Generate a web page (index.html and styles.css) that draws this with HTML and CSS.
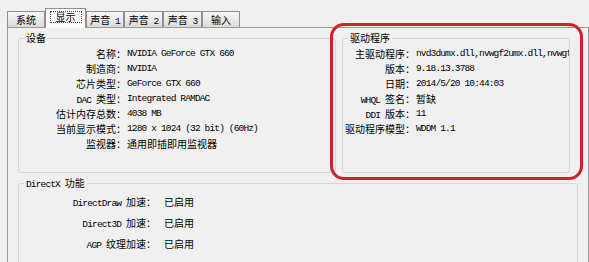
FILE: index.html
```html
<!DOCTYPE html>
<html lang="zh-CN">
<head>
<meta charset="utf-8">
<title>DirectX 诊断工具 - 显示</title>
<link rel="stylesheet" href="styles.css">
</head>
<body>
<div class="window">
  <div class="tabs">
    <div class="tab w38">系统</div>
    <div class="tab sel"><span class="focus">显示</span></div>
    <div class="tab w38">声音<span class="lt"> 1</span></div>
    <div class="tab w39">声音<span class="lt"> 2</span></div>
    <div class="tab w39">声音<span class="lt"> 3</span></div>
    <div class="tab w38">输入</div>
  </div>
  <div class="panel">
    <div class="top">
      <fieldset class="group dev">
        <legend>设备</legend>
        <div class="rows">
          <div class="k">名称：</div><div class="v">NVIDIA GeForce GTX 660</div>
          <div class="k">制造商：</div><div class="v">NVIDIA</div>
          <div class="k">芯片类型：</div><div class="v">GeForce GTX 660</div>
          <div class="k"><span class="lt">DAC </span>类型：</div><div class="v">Integrated RAMDAC</div>
          <div class="k">估计内存总数：</div><div class="v">4038 MB</div>
          <div class="k">当前显示模式：</div><div class="v">1280 x 1024 (32 bit) (60Hz)</div>
          <div class="k">监视器：</div><div class="v cn">通用即插即用监视器</div>
        </div>
      </fieldset>
      <fieldset class="group drv">
        <legend>驱动程序</legend>
        <div class="rows">
          <div class="k">主驱动程序：</div><div class="v">nvd3dumx.dll,nvwgf2umx.dll,nvwgf2umx.dll</div>
          <div class="k">版本：</div><div class="v">9.18.13.3788</div>
          <div class="k">日期：</div><div class="v">2014/5/20 10:44:03</div>
          <div class="k"><span class="lt">WHQL </span>签名：</div><div class="v cn">暂缺</div>
          <div class="k"><span class="lt">DDI </span>版本：</div><div class="v">11</div>
          <div class="k">驱动程序模型：</div><div class="v">WDDM 1.1</div>
        </div>
      </fieldset>
    </div>
    <fieldset class="group dx">
      <legend><span class="lt">DirectX </span>功能</legend>
      <div class="rows">
        <div class="k"><span class="lt">DirectDraw </span>加速：</div><div class="v cn">已启用</div>
        <div class="k"><span class="lt">Direct3D </span>加速：</div><div class="v cn">已启用</div>
        <div class="k"><span class="lt">AGP </span>纹理加速：</div><div class="v cn">已启用</div>
      </div>
    </fieldset>
  </div>
  <div class="mark"></div>
</div>
</body>
</html>
```
FILE: styles.css
```css
html, body {
  margin: 0;
  width: 589px;
  height: 262px;
  overflow: hidden;
  background: #f0f0f0;
}
body {
  font-family: "Noto Sans CJK SC", sans-serif;
  font-size: 10px;
  color: #000;
}
.window {
  position: relative;
  padding: 8px 0 0 7px;
}
.tabs {
  display: flex;
  align-items: flex-end;
  height: 19px;
}
.tab {
  box-sizing: border-box;
  height: 16px;
  border: 1px solid #8e8f8f;
  border-bottom: 0;
  background: linear-gradient(#f6f6f6, #e9e9e9 50%, #dadada);
  text-align: center;
  line-height: 15px;
  white-space: nowrap;
}
.w38 { width: 38px; }
.w39 { width: 39px; }
.tab.sel {
  position: relative;
  z-index: 1;
  width: 41px;
  height: 20px;
  margin-bottom: -1px;
  padding-top: 2px;
  line-height: 10px;
  background: #fbfbfb;
}
.focus {
  display: inline-block;
  border: 1px dotted #444;
  padding: 0 5px;
  line-height: 10px;
}
.lt {
  font-family: "Liberation Mono", monospace;
  font-size: 9.5px;
  letter-spacing: -0.85px;
  line-height: 9px;
}
.panel {
  box-sizing: border-box;
  width: 582px;
  height: 260px;
  border: 1px solid #9a9a9a;
  padding: 4px 0 0 10px;
  background: #f0f0f0;
}
.top {
  display: flex;
  gap: 6px;
}
.group {
  box-sizing: border-box;
  margin: 0;
  padding: 0;
  min-width: 0;
  border: 1px solid #d3d8dc;
  border-radius: 3px;
}
.group legend {
  margin-left: 5px;
  padding: 0 2px;
  line-height: 12px;
}
.dev { width: 318px; height: 141px; }
.drv { width: 228px; height: 141px; }
.dx { width: 560px; height: 100px; margin-top: 4px; }
.rows {
  display: grid;
  grid-template-columns: 107px minmax(0, 1fr);
  grid-auto-rows: 15px;
  padding-top: 2px;
  line-height: 15px;
}
.drv .rows { grid-template-columns: 72px minmax(0, 1fr); }
.dx .rows {
  grid-template-columns: 137px minmax(0, 1fr);
  grid-auto-rows: 21px;
  column-gap: 7px;
  line-height: 21px;
}
.k {
  text-align: right;
  white-space: nowrap;
}
.v {
  white-space: nowrap;
  overflow: hidden;
  padding-left: 1px;
  font-family: "Liberation Mono", monospace;
  font-size: 9.5px;
  letter-spacing: -0.85px;
}
.v.cn {
  font-family: "Noto Sans CJK SC", sans-serif;
  font-size: 10px;
  letter-spacing: 0;
}
.mark {
  position: absolute;
  left: 330px;
  top: 23px;
  width: 253px;
  height: 157px;
  box-sizing: border-box;
  border: 3px solid #d2212c;
  border-radius: 14px;
}
```
